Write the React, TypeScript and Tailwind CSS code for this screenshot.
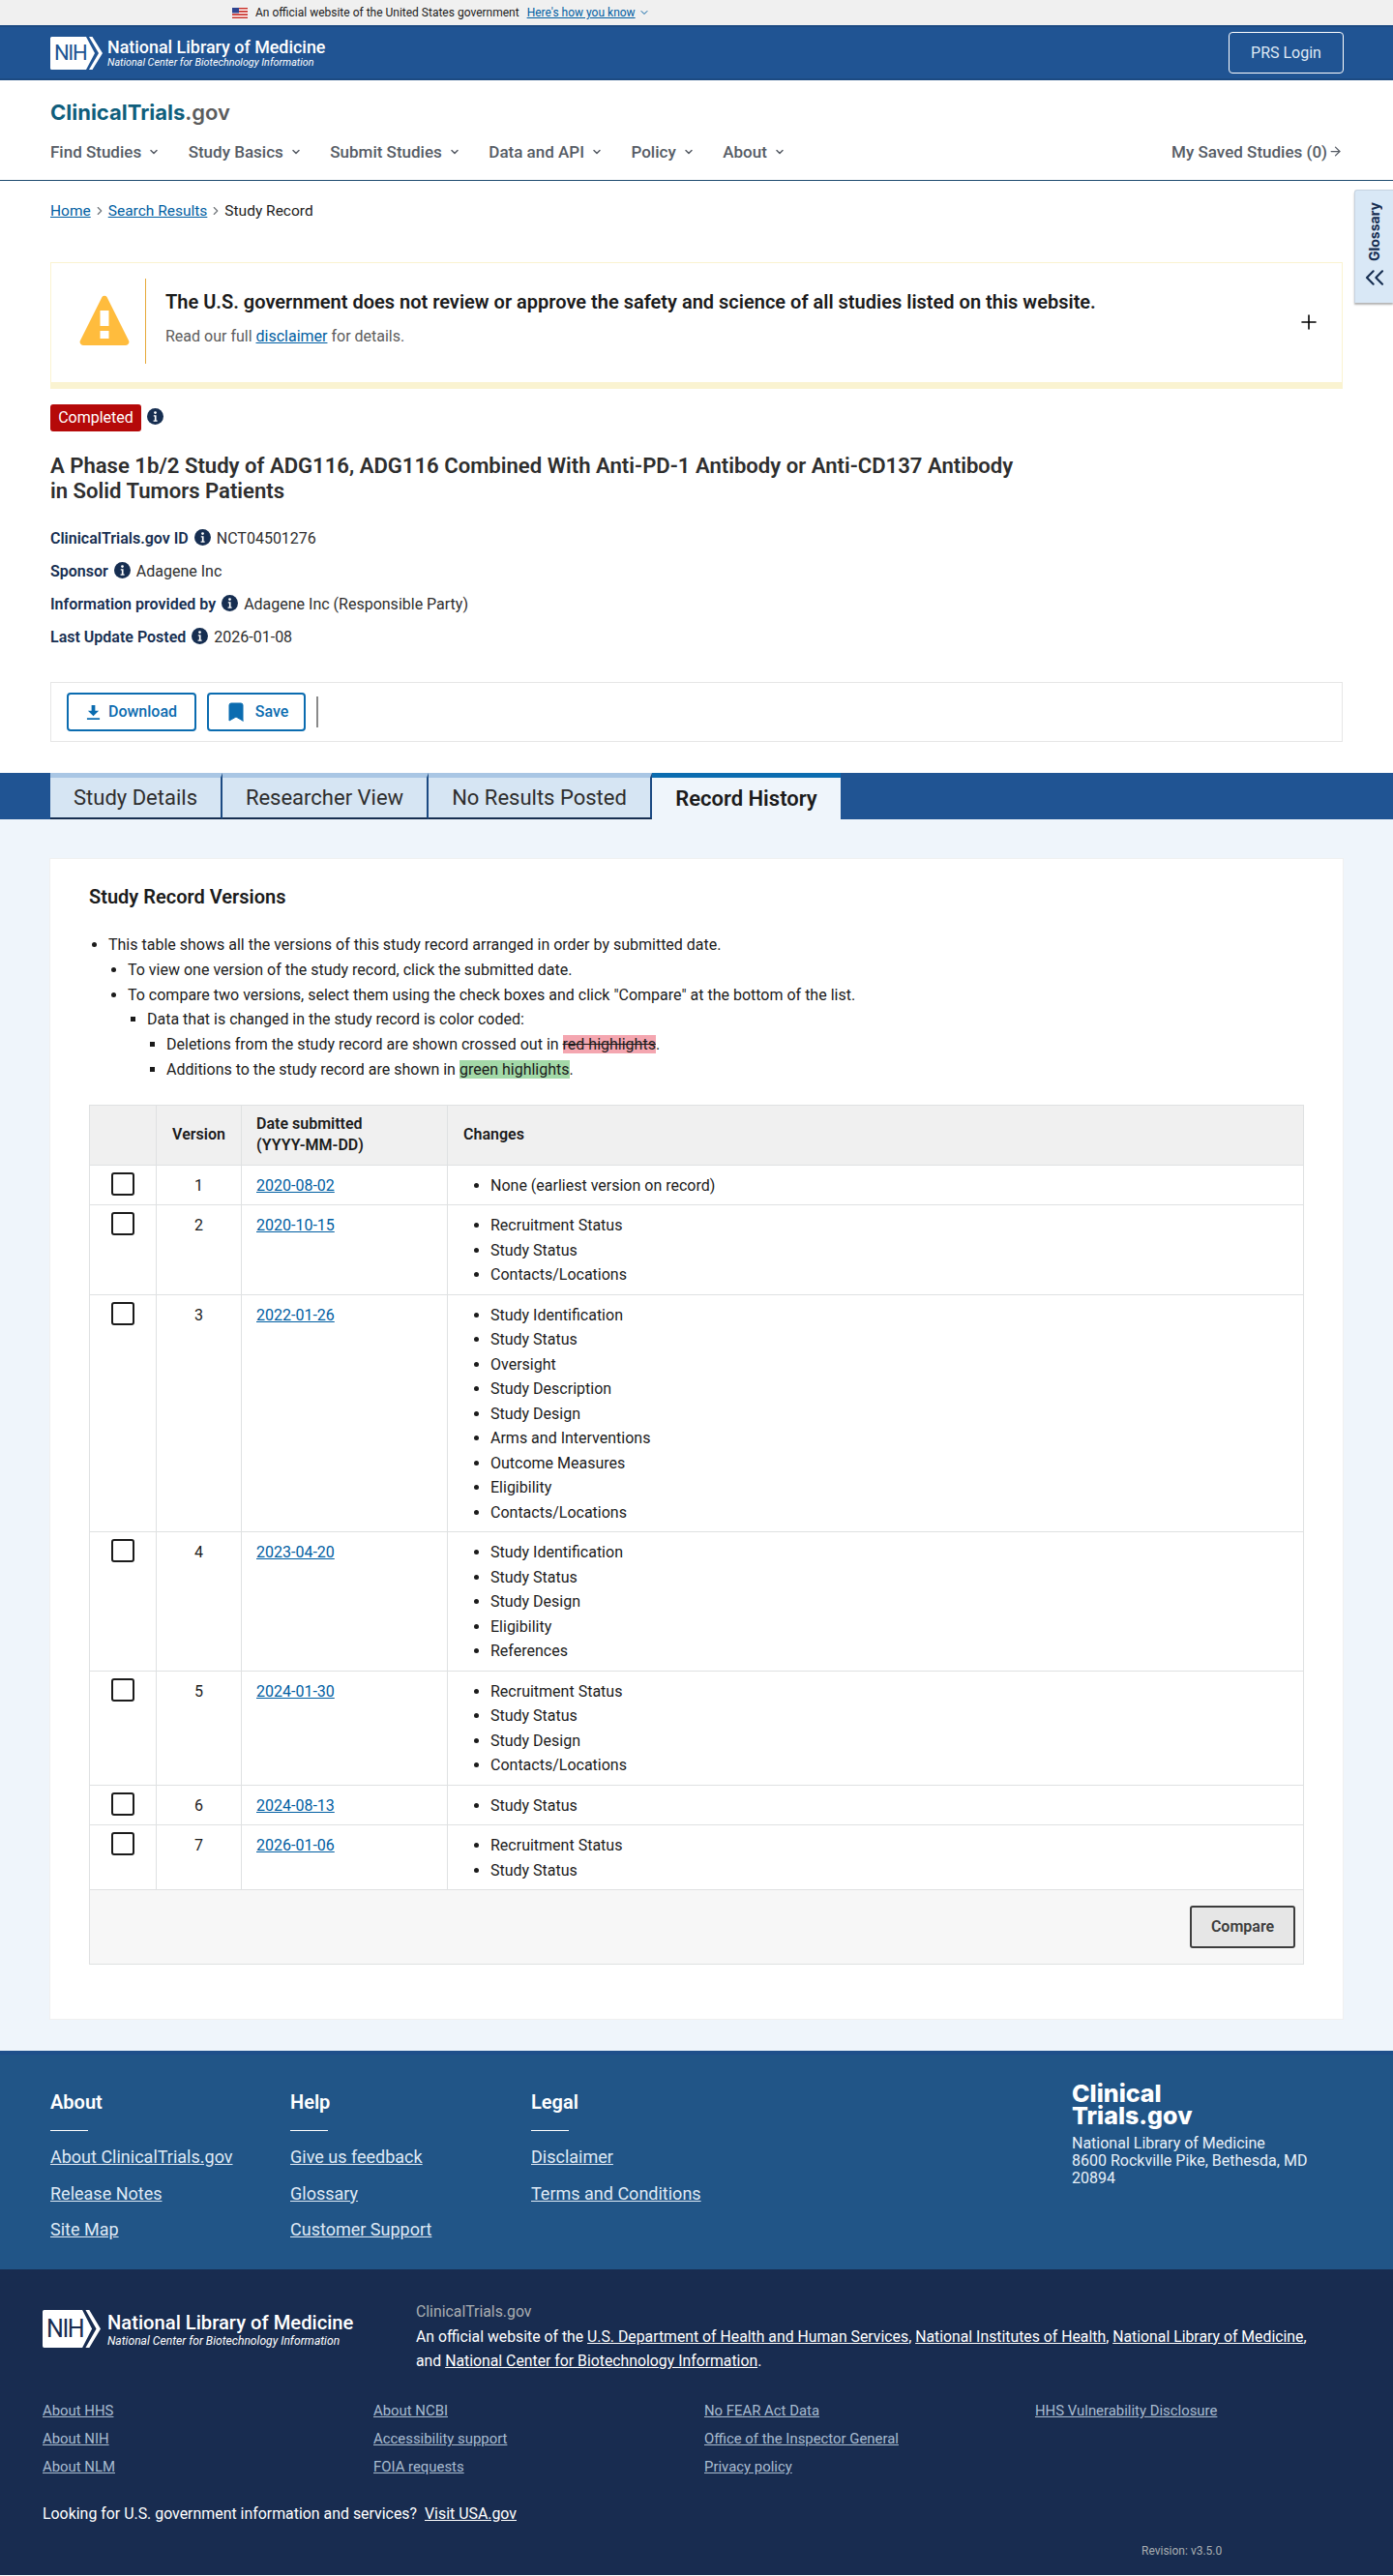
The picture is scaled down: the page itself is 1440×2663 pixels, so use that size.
import { ChevronDown, ChevronRight, ArrowRight, ChevronsLeft, Plus, Bookmark } from 'lucide-react'

const navItems = ['Find Studies', 'Study Basics', 'Submit Studies', 'Data and API', 'Policy', 'About']

const versions = [
  { n: 1, date: '2020-08-02', changes: ['None (earliest version on record)'] },
  { n: 2, date: '2020-10-15', changes: ['Recruitment Status', 'Study Status', 'Contacts/Locations'] },
  {
    n: 3,
    date: '2022-01-26',
    changes: [
      'Study Identification',
      'Study Status',
      'Oversight',
      'Study Description',
      'Study Design',
      'Arms and Interventions',
      'Outcome Measures',
      'Eligibility',
      'Contacts/Locations',
    ],
  },
  { n: 4, date: '2023-04-20', changes: ['Study Identification', 'Study Status', 'Study Design', 'Eligibility', 'References'] },
  { n: 5, date: '2024-01-30', changes: ['Recruitment Status', 'Study Status', 'Study Design', 'Contacts/Locations'] },
  { n: 6, date: '2024-08-13', changes: ['Study Status'] },
  { n: 7, date: '2026-01-06', changes: ['Recruitment Status', 'Study Status'] },
]

const tabs = [
  { label: 'Study Details', width: 'w-[178px]' },
  { label: 'Researcher View', width: 'w-[213px]' },
  { label: 'No Results Posted', width: 'w-[231px]' },
]

const footerColumns = [
  { title: 'About', width: 'w-[248px]', links: ['About ClinicalTrials.gov', 'Release Notes', 'Site Map'] },
  { title: 'Help', width: 'w-[249px]', links: ['Give us feedback', 'Glossary', 'Customer Support'] },
  { title: 'Legal', width: 'w-[250px]', links: ['Disclaimer', 'Terms and Conditions'] },
]

const lowerLinks = [
  ['About HHS', 'About NIH', 'About NLM'],
  ['About NCBI', 'Accessibility support', 'FOIA requests'],
  ['No FEAR Act Data', 'Office of the Inspector General', 'Privacy policy'],
  ['HHS Vulnerability Disclosure'],
]

const meta = [
  { label: 'ClinicalTrials.gov ID', value: 'NCT04501276' },
  { label: 'Sponsor', value: 'Adagene Inc' },
  { label: 'Information provided by', value: 'Adagene Inc (Responsible Party)' },
  { label: 'Last Update Posted', value: '2026-01-08' },
]

function InfoDot() {
  return (
    <svg viewBox="0 0 16 16" className="w-[17px] h-[17px] shrink-0 -mt-[3px]" aria-hidden="true">
      <circle cx="8" cy="8" r="8" fill="#162e51" />
      <circle cx="8" cy="4.3" r="1.3" fill="#fff" />
      <path d="M6.4 6.8h2.6v5h1v1.2H6.2v-1.2h1.2V8H6.4z" fill="#fff" />
    </svg>
  )
}

function NihLogo({ box, text, color }: { box: string; text: string; color: string }) {
  return (
    <div className={`relative shrink-0 ${box}`}>
      <svg viewBox="0 0 54 34" preserveAspectRatio="none" className="w-full h-full" aria-hidden="true">
        <path d="M1.5 0H37L46 17 37 34H1.5A1.5 1.5 0 0 1 0 32.5V1.5A1.5 1.5 0 0 1 1.5 0Z" fill="#fff" />
        <path d="M40 0H43.5L54 17 43.5 34H40L50 17Z" fill="#fff" />
      </svg>
      <span className={`absolute left-[4px] inset-y-0 flex items-center tracking-[-1.4px] font-['Roboto',sans-serif] ${text} ${color}`}>NIH</span>
    </div>
  )
}

function App() {
  return (
    <div className="min-h-[2663px] bg-white text-[#1b1b1b] font-['Roboto',sans-serif] relative">
      {/* gov banner */}
      <div className="h-[26px] bg-[#f0f0f0] flex items-center pl-[240px] text-[12px] leading-none">
        <svg viewBox="0 0 16 11" className="w-4 h-[11px] mr-[8px]" aria-hidden="true">
          <rect width="16" height="11" fill="#fff" />
          <path d="M0 0h16v1.6H0zM0 3.1h16v1.6H0zM0 6.3h16v1.6H0zM0 9.4h16V11H0z" fill="#c9342c" />
          <rect width="7" height="5.5" fill="#2f4590" />
        </svg>
        <span>An official website of the United States government</span>
        <a className="ml-[8px] text-[#005ea2] underline">Here's how you know</a>
        <ChevronDown className="w-3 h-3 ml-[3px] text-[#005ea2]" />
      </div>

      {/* NLM bar */}
      <div className="h-[57px] bg-[#205493] border-t-[2px] border-b-[2px] border-[#1c4a82] flex items-center justify-between pl-[52px] pr-[51px]">
        <div className="flex items-center gap-[5px]">
          <NihLogo box="w-[54px] h-[34px]" text="text-[22px]" color="text-[#205493]" />
          <div className="text-white">
            <div className="text-[17.9px] leading-[21px] font-medium whitespace-nowrap">National Library of Medicine</div>
            <div className="text-[10.75px] leading-[12px] italic whitespace-nowrap">National Center for Biotechnology Information</div>
          </div>
        </div>
        <a className="w-[119px] h-[43px] border border-white rounded-[4px] text-[#dfe9f5] text-[16px] flex items-center justify-center">PRS Login</a>
      </div>

      {/* site header */}
      <header className="h-[104px] border-b border-[#1c4a6e] pl-[52px] pr-[52px] pt-[17px]">
        <div className="text-[22px] leading-[32px] font-bold font-['Inter',sans-serif] text-[#0f5e7c]">
          ClinicalTrials<span className="font-semibold text-[#5c5c5c]">.gov</span>
        </div>
        <nav className="flex justify-between items-center mt-[13px] text-[#565c65] text-[17px] font-medium leading-[24px]">
          <div className="flex">
            {navItems.map(item => (
              <a key={item} className="flex items-center mr-[29.5px]">
                {item}
                <ChevronDown className="w-3 h-3 ml-[7px] stroke-[3]" />
              </a>
            ))}
          </div>
          <a className="flex items-center -mt-[1px]">
            My Saved Studies (0)
            <ArrowRight className="w-[15px] h-[15px] ml-[1px]" />
          </a>
        </nav>
      </header>

      {/* glossary tab */}
      <div className="absolute right-0 top-[196px] w-[40px] h-[117px] bg-[#d9e8f6] border-l border-t border-[#c6d3e0] shadow-[0_2px_2px_rgba(0,0,0,0.3)] rounded-tl-[3px] flex flex-col items-center pt-[12px] text-[#162e51]">
        <span className="[writing-mode:vertical-rl] rotate-180 text-[14px] leading-[20px] font-bold font-['Inter',sans-serif]">Glossary</span>
        <ChevronsLeft className="w-[32px] h-[32px] mt-[1px]" strokeWidth={1.6} />
      </div>

      <main className="px-[52px]">
        {/* breadcrumb */}
        <div className="flex items-center text-[15.5px] leading-[24px] pt-[19px]">
          <a className="text-[#005ea2] underline">Home</a>
          <ChevronRight className="w-[14px] h-[14px] mx-[2px] text-[#71767a]" />
          <a className="text-[#005ea2] underline">Search Results</a>
          <ChevronRight className="w-[14px] h-[14px] mx-[2px] text-[#71767a]" />
          <span>Study Record</span>
        </div>

        {/* disclaimer */}
        <div className="mt-[41px] h-[131px] border border-[#faf3d1] border-b-[7px] flex items-start pt-[16px] relative">
          <svg viewBox="0 0 52 52" className="w-[52px] h-[52px] ml-[29px] mt-[17px]" aria-hidden="true">
            <path d="M23.5 2a3 3 0 0 1 5 0L51 47a3.4 3.4 0 0 1-3 5H4a3.4 3.4 0 0 1-3-5z" fill="#ffbc3d" />
            <rect x="21.5" y="16" width="9" height="16" fill="#fff" />
            <rect x="21.5" y="37" width="9" height="8" fill="#fff" />
          </svg>
          <div className="w-px h-[88px] bg-[#e6a93a] ml-[16px]" />
          <div className="ml-[20px]">
            <div className="text-[20px] leading-[26px] font-semibold mt-[11px]">The U.S. government does not review or approve the safety and science of all studies listed on this website.</div>
            <div className="text-[16px] leading-[24px] text-[#5c5c5c] mt-[11px]">
              Read our full <a className="text-[#005ea2] underline">disclaimer</a> for details.
            </div>
          </div>
          <Plus className="absolute right-[22px] top-[49px] w-[24px] h-[24px] text-black" strokeWidth={1.6} />
        </div>

        {/* status */}
        <div className="flex items-start mt-[16px]">
          <span className="h-[28px] w-[94px] text-center rounded-[3px] bg-[#b50909] text-white text-[16px] leading-[27px]">Completed</span>
          <span className="ml-[6px] mt-[7px] flex"><InfoDot /></span>
        </div>

        <h1 className="mt-[23px] text-[22.1px] leading-[25.5px] font-semibold text-[#2e2e2e] max-w-[1000px]">
          A Phase 1b/2 Study of ADG116, ADG116 Combined With Anti-PD-1 Antibody or Anti-CD137 Antibody in Solid Tumors Patients
        </h1>

        <div className="mt-[20px]">
          {meta.map(m => (
            <div key={m.label} className="flex items-center gap-[6px] h-[34px] text-[16px]">
              <span className="font-semibold text-[#162e51]">{m.label}</span>
              <InfoDot />
              <span className="text-[#2e2e2e]">{m.value}</span>
            </div>
          ))}
        </div>

        {/* actions */}
        <div className="mt-[29px] h-[62px] border border-[#e6e6e6] flex items-center pl-[16px] gap-[11px]">
          <button className="w-[134px] h-[40px] border-2 border-[#0b6cb0] rounded-[4px] flex items-center justify-center gap-[8px] text-[#0b6cb0] text-[16px] font-medium">
            <svg viewBox="0 0 16 18" className="w-[15px] h-[17px]" aria-hidden="true" fill="currentColor">
              <path d="M6 1h4v6h4l-6 6-6-6h4zM1 15h14v2H1z" />
            </svg>
            Download
          </button>
          <button className="w-[102px] h-[40px] border-2 border-[#0b6cb0] rounded-[4px] flex items-center justify-center gap-[8px] text-[#0b6cb0] text-[16px] font-medium">
            <Bookmark className="w-[24px] h-[24px] fill-current" strokeWidth={1} />
            Save
          </button>
          <div className="w-[2px] h-[32px] bg-[#8a8a8a]" />
        </div>
      </main>

      {/* tabs */}
      <div className="mt-[32px] h-[48px] bg-[#205493] pl-[52px] flex items-stretch">
        {tabs.map(tab => (
          <div
            key={tab.label}
            className={`${tab.width} bg-[#d6e5f3] border-t-[5px] border-t-[#a9c6e4] border-r-2 border-r-[#1c4a82] border-b-2 border-b-[#162e51] flex items-center justify-center text-[22px] text-[#2e2e2e] whitespace-nowrap`}
          >
            {tab.label}
          </div>
        ))}
        <div className="w-[195px] bg-[#eff5fb] border-t-[5px] border-t-[#0b6cb0] flex items-center justify-center text-[22px] font-semibold">Record History</div>
      </div>

      {/* record versions */}
      <section className="bg-[#eff5fb] px-[51px] pt-[40px] pb-[32px]">
        <div className="bg-white border border-[#f0f0f0] px-[40px] pt-[25px] pb-[56px]">
          <h2 className="text-[20px] leading-[28px] font-semibold">Study Record Versions</h2>
          <ul className="mt-[23px] text-[16px] leading-[25px] list-disc pl-[20px] [&_li]:mb-[0.8px]">
            <li>This table shows all the versions of this study record arranged in order by submitted date.</li>
            <ul className="list-disc pl-[20px]">
              <li>To view one version of the study record, click the submitted date.</li>
              <li>To compare two versions, select them using the check boxes and click "Compare" at the bottom of the list.</li>
              <ul className="list-[square] pl-[20px]">
                <li>Data that is changed in the study record is color coded:</li>
                <ul className="list-[square] pl-[20px]">
                  <li>Deletions from the study record are shown crossed out in <span className="line-through bg-[#f4a6b0]">red highlights</span>.</li>
                  <li>Additions to the study record are shown in <span className="bg-[#a3d9a8]">green highlights</span>.</li>
                </ul>
              </ul>
            </ul>
          </ul>

          <table className="mt-[24px] w-full border-collapse text-[16px] table-fixed">
            <thead>
              <tr className="bg-[#f0f0f0] text-left h-[62px]">
                <th className="w-[69px] border border-[#dfe1e2]" />
                <th className="w-[88px] border border-[#dfe1e2] text-center font-semibold">Version</th>
                <th className="w-[213px] border border-[#dfe1e2] px-[15px] leading-[22px] font-semibold">Date submitted<br />(YYYY-MM-DD)</th>
                <th className="border border-[#dfe1e2] px-[16px] font-semibold">Changes</th>
              </tr>
            </thead>
            <tbody>
              {versions.map(v => (
                <tr key={v.n}>
                  <td className="border border-[#dfe1e2] align-top pt-[7px]">
                    <div className="w-[24px] h-[24px] border-2 border-[#1b1b1b] rounded-[3px] mx-auto" />
                  </td>
                  <td className="border border-[#dfe1e2] align-top text-center pt-[8px] leading-[25px]">{v.n}</td>
                  <td className="border border-[#dfe1e2] align-top px-[15px] pt-[8px] leading-[25px]">
                    <a className="text-[#005ea2] underline">{v.date}</a>
                  </td>
                  <td className="border border-[#dfe1e2] align-top pl-[44px] pt-[8px] pb-[7px]">
                    <ul className="list-disc leading-[25px]">
                      {v.changes.map((c, i) => <li key={i} className="mb-[0.5px]">{c}</li>)}
                    </ul>
                  </td>
                </tr>
              ))}
              <tr className="bg-[#f7f7f7]">
                <td colSpan={4} className="border border-[#dfe1e2] h-[77px] pr-[8px] text-right">
                  <button className="w-[109px] h-[44px] bg-[#e6e6e6] border-2 border-[#3d3d3d] rounded-[3px] font-semibold text-[#3d3d3d]">Compare</button>
                </td>
              </tr>
            </tbody>
          </table>
        </div>
      </section>

      {/* footer top */}
      <footer className="h-[226px] bg-[#215587] border-t-[4px] border-[#1f4f8a] px-[52px] pt-[35px] flex text-white">
        {footerColumns.map(col => (
          <div key={col.title} className={col.width}>
            <h3 className="text-[20px] leading-[28px] font-semibold">{col.title}</h3>
            <div className="w-[39px] h-px bg-white mt-[15px] mb-[15px]" />
            <ul className="text-[18px] leading-[24px] text-[#dfe9f5]">
              {col.links.map(l => <li key={l} className="mb-[13.5px]"><a className="underline">{l}</a></li>)}
            </ul>
          </div>
        ))}
        <div className="ml-auto w-[280px] -mt-[6px]">
          <div className="text-[25px] leading-[23px] font-extrabold font-['Inter',sans-serif] mb-[8px]">Clinical<br />Trials.gov</div>
          <div className="text-[16px] leading-[18px] text-[#e8f0f8]">National Library of Medicine<br />8600 Rockville Pike, Bethesda, MD<br />20894</div>
        </div>
      </footer>

      {/* footer bottom */}
      <div className="h-[316px] bg-[#182c50] px-[44px] pt-[31px] relative text-white">
        <div className="flex">
          <div className="w-[386px] flex items-center h-[39px] mt-[11px] gap-[7px]">
            <NihLogo box="w-[60px] h-[39px]" text="text-[25px]" color="text-[#182c50]" />
            <div>
              <div className="text-[20.2px] leading-[24px] font-medium whitespace-nowrap">National Library of Medicine</div>
              <div className="text-[12.1px] leading-[14px] italic whitespace-nowrap">National Center for Biotechnology Information</div>
            </div>
          </div>
          <div className="text-[15.8px] leading-[25.5px]">
            <div className="text-[#a9aeb1]">ClinicalTrials.gov</div>
            <div className="w-[930px]">
              An official website of the <a className="underline">U.S. Department of Health and Human Services</a>, <a className="underline">National Institutes of Health</a>, <a className="underline">National Library of Medicine</a>, and <a className="underline">National Center for Biotechnology Information</a>.
            </div>
          </div>
        </div>
        <div className="grid grid-cols-[342px_342px_342px_1fr] mt-[24px] text-[14.9px] leading-[29px] text-[#a9bcd0]">
          {lowerLinks.map((col, i) => (
            <div key={i}>
              {col.map(l => <div key={l}><a className="underline">{l}</a></div>)}
            </div>
          ))}
        </div>
        <div className="mt-[22px] text-[15.9px] leading-[24px]">
          Looking for U.S. government information and services?&nbsp; <a className="underline">Visit USA.gov</a>
        </div>
        <div className="absolute left-[1180px] top-[282px] text-[12px] text-[#a9aeb1]">Revision: v3.5.0</div>
      </div>
    </div>
  )
}

export default App
